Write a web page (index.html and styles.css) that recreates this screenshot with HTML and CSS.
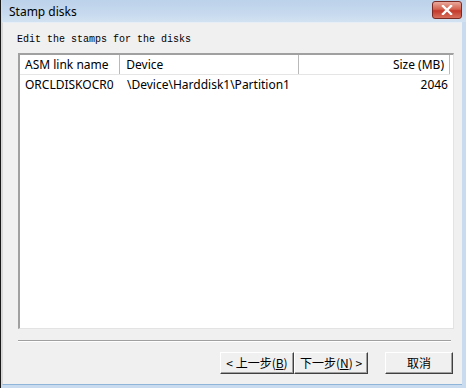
FILE: index.html
```html
<!DOCTYPE html>
<html>
  <head>
    <meta charset="utf-8"/>
    <link rel="stylesheet" href="styles.css">
  </head>
  <body>
    <div class="window">
      <div class="titlebar">
        <span class="title">Stamp disks</span>
        <span class="close">
          <svg width="12" height="10" viewBox="0 0 12 10">
            <path d="M2,1 L10,9 M10,1 L2,9" stroke="#fff" stroke-width="2.4" stroke-linecap="square"/>
          </svg>
        </span>
      </div>
      <div class="client">
        <div class="caption">Edit the stamps for the disks</div>
        <div class="listview">
          <div class="header">
            <div class="col c1">ASM link name</div>
            <div class="col c2">Device</div>
            <div class="col c3">Size (MB)</div>
          </div>
          <div class="row">
            <div class="cell c1">ORCLDISKOCR0</div>
            <div class="cell c2">\Device\Harddisk1\Partition1</div>
            <div class="cell c3">2046</div>
          </div>
        </div>
        <div class="separator"></div>
        <div class="buttons">
          <button class="btn back">&lt; 上一步(<u>B</u>)</button>
          <button class="btn next">下一步(<u>N</u>) &gt;</button>
          <button class="btn cancel">取消</button>
        </div>
      </div>
    </div>
  </body>
</html>
```

FILE: styles.css
```css
body {
  margin: 0;
  width: 466px;
  height: 388px;
  overflow: hidden;
}
.window {
  width: 466px;
  height: 388px;
  box-sizing: border-box;
  display: flex;
  flex-direction: column;
  background: #c9dcef;
  border-left: 1px solid #1a1a1a;
  padding: 0 4px 3px 1px;
}
.titlebar {
  height: 22px;
  display: flex;
  align-items: center;
  justify-content: space-between;
  background: linear-gradient(to bottom, #bcd2ea, #c6d9ee 60%, #d2e2f2);
  padding: 0 4px 0 7px;
  margin-right: -4px;
}
.title {
  font-family: "Noto Sans", "Liberation Sans", sans-serif;
  font-size: 12px;
  color: #000;
}
.close {
  width: 28px;
  height: 16px;
  margin-top: -3px;
  border: 1px solid #7a2a22;
  border-radius: 3px;
  background: linear-gradient(to bottom, #e9a99d, #d4634f 45%, #c3392a 55%, #d6705c);
  display: flex;
  align-items: center;
  justify-content: center;
}
.client {
  flex: 1;
  background: #f0f0f0;
  border-left: 1px solid #d8d8d8;
  border-top: 1px solid #e8eef5;
  border-bottom: 1px solid #8fb6d8;
  display: flex;
  flex-direction: column;
  padding: 0 8px 0 14px;
}
.caption {
  font-family: "Liberation Mono", "Noto Sans CJK SC", monospace;
  font-size: 10px;
  color: #000;
  margin: 10px 0 0 0;
  height: 14px;
  line-height: 14px;
}
.listview {
  margin: 6px 0 0 1px;
  height: 273px;
  background: #fff;
  border-top: 2px solid #a0a0a0;
  border-left: 2px solid #a0a0a0;
  border-right: 1px solid #e3e3e3;
  border-bottom: 1px solid #e3e3e3;
  font-family: "Noto Sans", "Liberation Sans", sans-serif;
  font-size: 12px;
  color: #000;
}
.header {
  display: flex;
  height: 19px;
  border-bottom: 1px solid #e5e5e5;
  background: #fff;
  margin-right: 3px;
}
.col {
  box-sizing: border-box;
  padding: 0 5px;
  line-height: 19px;
  border-right: 1px solid #b9b9b9;
}
.row {
  display: flex;
  height: 18px;
  margin-top: 1px;
}
.cell {
  box-sizing: border-box;
  padding: 0 5px;
  line-height: 18px;
}
.c1 { width: 101px; }
.c2 { width: 180px; padding-left: 6px; }
.c3 { width: 152px; text-align: right; }
.separator {
  margin: 11px 3px 0 1px;
  height: 0;
  border-top: 1px solid #a0a0a0;
  border-bottom: 1px solid #ffffff;
}
.buttons {
  display: flex;
  justify-content: flex-end;
  margin: 10px 0 0 0;
  padding-right: 1px;
}
.btn {
  font-family: "Noto Sans CJK SC", sans-serif;
  font-size: 12px;
  color: #000;
  height: 22px;
  padding: 0;
  background: #f0f0f0;
  border-top: 1px solid #ffffff;
  border-left: 1px solid #ffffff;
  border-right: 1px solid #404040;
  border-bottom: 1px solid #404040;
  box-shadow: inset -1px -1px 0 #a0a0a0;
  line-height: 18px;
}
.back { width: 74px; }
.next { width: 74px; }
.cancel { width: 68px; margin-left: 17px; }
```
